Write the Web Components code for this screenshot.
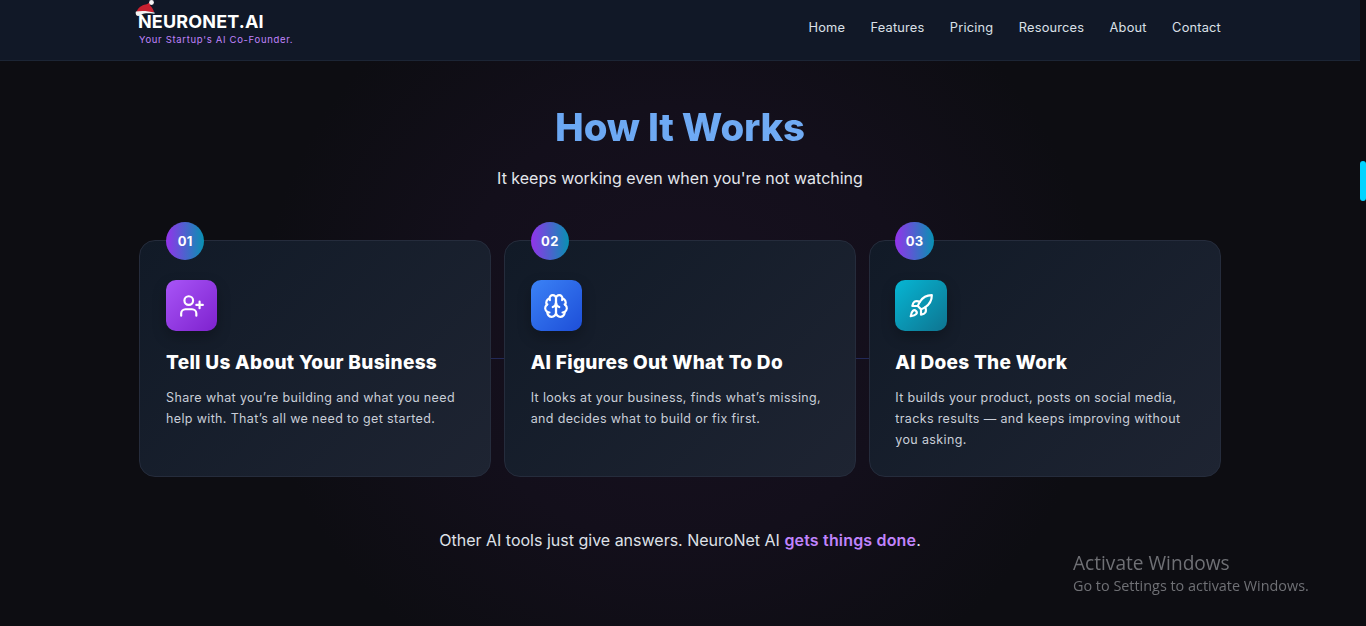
<!DOCTYPE html>
<html lang="en">
<head>
<meta charset="utf-8">
<title>NeuroNet.AI</title>
<style>
    html, body { margin: 0; height: 100%; overflow: hidden; background: #0d0d12; }
    body { display: flex; font-family: "Inter", "Liberation Sans", sans-serif; color: #fff; }
    app-page { flex: 1; min-width: 0; }
    page-rail { width: 6px; }
</style>
</head>
<body>
<app-page>
    <site-header slot="header"></site-header>
    <how-section>
        <step-card num="01" icon="user" tone="purple" heading="Tell Us About Your Business">
            Share what you’re building and what you need help with. That’s all we need to get started.
        </step-card>
        <step-card num="02" icon="brain" tone="blue" heading="AI Figures Out What To Do">
            It looks at your business, finds what’s missing, and decides what to build or fix first.
        </step-card>
        <step-card num="03" icon="rocket" tone="cyan" heading="AI Does The Work">
            It builds your product, posts on social media, tracks results — and keeps improving without you asking.
        </step-card>
    </how-section>
</app-page>
<page-rail></page-rail>
<win-watermark></win-watermark>

<script>
const ICONS = {
    user: `<path d="M16 21v-2a4 4 0 0 0-4-4H6a4 4 0 0 0-4 4v2"/><circle cx="9" cy="7" r="4"/><line x1="19" x2="19" y1="8" y2="14"/><line x1="22" x2="16" y1="11" y2="11"/>`,
    brain: `<path d="M12 5a3 3 0 1 0-5.997.125 4 4 0 0 0-2.526 5.77 4 4 0 0 0 .556 6.588A4 4 0 1 0 12 18Z"/><path d="M12 5a3 3 0 1 1 5.997.125 4 4 0 0 1 2.526 5.77 4 4 0 0 1-.556 6.588A4 4 0 1 1 12 18Z"/><path d="M15 13a4.5 4.5 0 0 1-3-4 4.5 4.5 0 0 1-3 4"/><path d="M17.599 6.5a3 3 0 0 0 .399-1.375"/><path d="M6.003 5.125A3 3 0 0 0 6.401 6.5"/><path d="M3.477 10.896a4 4 0 0 1 .585-.396"/><path d="M19.938 10.5a4 4 0 0 1 .585.396"/><path d="M6 18a4 4 0 0 1-1.967-.516"/><path d="M19.967 17.484A4 4 0 0 1 18 18"/>`,
    rocket: `<path d="M4.5 16.5c-1.5 1.26-2 5-2 5s3.74-.5 5-2c.71-.84.7-2.13-.09-2.91a2.18 2.18 0 0 0-2.91-.09z"/><path d="m12 15-3-3a22 22 0 0 1 2-3.95A12.88 12.88 0 0 1 22 2c0 2.72-.78 7.5-6 11a22.35 22.35 0 0 1-4 2z"/><path d="M9 12H4s.55-3.03 2-4c1.62-1.08 5 0 5 0"/><path d="M12 15v5s3.03-.55 4-2c1.08-1.62 0-5 0-5"/>`
};

class AppPage extends HTMLElement {
    constructor() {
        super();
        this.attachShadow({ mode: "open" });
    }

    connectedCallback() {
        this.shadowRoot.innerHTML = `
            <style>
                :host {
                    display: block;
                    height: 626px;
                    overflow: hidden;
                    background: radial-gradient(ellipse 420px 400px at 50% 52%, #17101f 0%, #130f1b 55%, #0d0d12 100%);
                }
            </style>
            <slot name="header"></slot>
            <slot></slot>
        `;
    }
}

class SiteHeader extends HTMLElement {
    constructor() {
        super();
        this.attachShadow({ mode: "open" });
    }

    connectedCallback() {
        const links = ["Home", "Features", "Pricing", "Resources", "About", "Contact"];
        this.shadowRoot.innerHTML = `
            <style>
                :host {
                    display: block;
                    height: 60px;
                    background: #111827;
                    border-bottom: 1px solid #1c2535;
                }
                .bar {
                    width: 1082px;
                    height: 60px;
                    margin: 0 auto;
                    display: flex;
                    justify-content: space-between;
                    align-items: flex-start;
                }
                .brand { position: relative; padding-top: 12px; }
                .name {
                    font-size: 18px;
                    font-weight: 700;
                    line-height: 20px;
                    letter-spacing: 0.15px;
                    color: #fff;
                    margin-left: -1px;
                }
                .tag {
                    font-size: 9.5px;
                    line-height: 12px;
                    letter-spacing: 0.68px;
                    color: #c084fc;
                    margin-top: 2px;
                }
                .hat { position: absolute; left: -4px; top: 0; }
                nav { display: flex; gap: 25.4px; padding-top: 19px; }
                a {
                    font-size: 12.8px;
                    line-height: 17px;
                    letter-spacing: 0.2px;
                    color: #dbe0e8;
                    text-decoration: none;
                }
            </style>
            <div class="bar">
                <div class="brand">
                    <svg class="hat" width="21" height="17" viewBox="0 0 21 17">
                        <path d="M1.500 12C3 7.500 7 5 10.500 4.500c1.500-.3 3-1 4-2.300l1.500 1.300c-.6 1-1 1.600-.8 2.300 1.500 1.200 3 3.500 3.800 6.200z" fill="#c8202f"/>
                        <path d="M1 11.500C6 10.500 13 10.800 19.500 12.500c.3.500.2 1-.2 1.200C13 12.800 9 13.200 7.500 14c-1.200.8-2.500 2-4.500 2C1 16 .2 13 1 11.500z" fill="#f2f2f2"/>
                        <circle cx="16.500" cy="2.500" r="2.400" fill="#f5f5f5"/>
                    </svg>
                    <div class="name">NEURONET.AI</div>
                    <div class="tag">Your Startup's AI Co-Founder.</div>
                </div>
                <nav>${links.map(l => `<a href="#">${l}</a>`).join("")}</nav>
            </div>
        `;
    }
}

class HowSection extends HTMLElement {
    constructor() {
        super();
        this.attachShadow({ mode: "open" });
    }

    connectedCallback() {
        this.shadowRoot.innerHTML = `
            <style>
                :host { display: block; text-align: center; }
                h2 {
                    margin: 43px 0 0;
                    font-size: 38.4px;
                    line-height: 46px;
                    font-weight: 800;
                    letter-spacing: -0.2px;
                    background: linear-gradient(90deg, #5f9ff2, #7db4f5);
                    -webkit-background-clip: text;
                    background-clip: text;
                    color: transparent;
                }
                .sub {
                    margin: 16px 0 0;
                    font-size: 16px;
                    line-height: 24px;
                    color: #e3e6ec;
                }
                .grid {
                    position: relative;
                    width: 1081.2px;
                    margin: 50px auto 0;
                    display: grid;
                    grid-template-columns: repeat(3, 1fr);
                    gap: 12.8px;
                    text-align: left;
                }
                .line {
                    position: absolute;
                    left: 0;
                    right: 0;
                    top: 118px;
                    height: 1px;
                    background: #222957;
                }
                .foot {
                    margin: 51px 0 0;
                    font-size: 16px;
                    line-height: 24px;
                    color: #dfe1e8;
                }
                .foot b { font-weight: 600; letter-spacing: 0.17px; color: #c084fc; }
            </style>
            <h2>How It Works</h2>
            <p class="sub">It keeps working even when you're not watching</p>
            <div class="grid">
                <div class="line"></div>
                <slot></slot>
            </div>
            <p class="foot">Other AI tools just give answers. NeuroNet AI <b>gets things done</b>.</p>
        `;
    }
}

class StepCard extends HTMLElement {
    constructor() {
        super();
        this.attachShadow({ mode: "open" });
    }

    connectedCallback() {
        const tones = {
            purple: "linear-gradient(135deg, #a855f7, #7e22ce)",
            blue: "linear-gradient(135deg, #3b82f6, #1d4ed8)",
            cyan: "linear-gradient(135deg, #06b6d4, #0e7490)"
        };
        this.shadowRoot.innerHTML = `
            <style>
                :host {
                    display: block;
                    position: relative;
                    z-index: 1;
                    box-sizing: border-box;
                    height: 237px;
                    padding: 39px 25.6px 0;
                    border: 1px solid #252c3c;
                    border-radius: 16px;
                    background: linear-gradient(135deg, #111a27, #1e2432);
                }
                .num {
                    position: absolute;
                    left: 25.6px;
                    top: -19px;
                    width: 38.4px;
                    height: 38.4px;
                    border-radius: 50%;
                    display: flex;
                    align-items: center;
                    justify-content: center;
                    font-size: 13px;
                    font-weight: 700;
                    letter-spacing: 0.3px;
                    color: #fff;
                    background: linear-gradient(90deg, #9333ea, #0891b2);
                }
                .icon {
                    width: 51.2px;
                    height: 51.2px;
                    border-radius: 10px;
                    display: flex;
                    align-items: center;
                    justify-content: center;
                    background: ${tones[this.getAttribute("tone")]};
                    box-shadow: 0 6px 14px rgba(0, 0, 0, .25);
                }
                svg { fill: none; stroke: #fff; stroke-width: 2; stroke-linecap: round; stroke-linejoin: round; }
                h3 {
                    margin: 19px 0 0;
                    font-size: 19px;
                    line-height: 25px;
                    font-weight: 800;
                    letter-spacing: 0.31px;
                    color: #fff;
                    white-space: nowrap;
                }
                p {
                    margin: 12px 0 0;
                    font-size: 12.5px;
                    line-height: 21px;
                    letter-spacing: 0.36px;
                    color: #c9ced8;
                }
            </style>
            <div class="num">${this.getAttribute("num")}</div>
            <div class="icon">
                <svg width="26" height="26" viewBox="0 0 24 24">${ICONS[this.getAttribute("icon")]}</svg>
            </div>
            <h3>${this.getAttribute("heading")}</h3>
            <p><slot></slot></p>
        `;
    }
}

class PageRail extends HTMLElement {
    constructor() {
        super();
        this.attachShadow({ mode: "open" });
    }

    connectedCallback() {
        this.shadowRoot.innerHTML = `
            <style>
                :host { display: block; background: #0d0d12; padding-top: 161px; box-sizing: border-box; }
                div { height: 40px; border-radius: 3px; background: #00d4ff; }
            </style>
            <div></div>
        `;
    }
}

class WinWatermark extends HTMLElement {
    constructor() {
        super();
        this.attachShadow({ mode: "open" });
    }

    connectedCallback() {
        this.shadowRoot.innerHTML = `
            <style>
                :host {
                    position: fixed;
                    left: 1073px;
                    top: 551px;
                    font-family: "Open Sans", "Noto Sans", sans-serif;
                    color: #6f7075;
                    white-space: nowrap;
                }
                .a { font-size: 19.1px; line-height: 25px; }
                .b { font-size: 14.4px; line-height: 20px; }
            </style>
            <div class="a">Activate Windows</div>
            <div class="b">Go to Settings to activate Windows.</div>
        `;
    }
}

customElements.define("app-page", AppPage);
customElements.define("site-header", SiteHeader);
customElements.define("how-section", HowSection);
customElements.define("step-card", StepCard);
customElements.define("page-rail", PageRail);
customElements.define("win-watermark", WinWatermark);
</script>
</body>
</html>
